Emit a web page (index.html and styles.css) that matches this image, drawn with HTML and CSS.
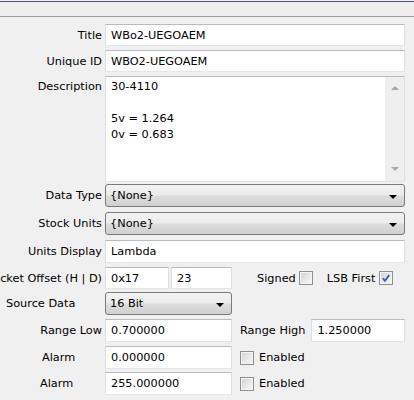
FILE: index.html
```html
<!DOCTYPE html>
<html>
<head>
<meta charset="utf-8">
<link rel="stylesheet" href="styles.css">
</head>
<body>
<div class="topbar"></div>
<div class="form">
  <div class="row h22">
    <div class="lbl">Title</div>
    <div class="field wide">WBo2-UEGOAEM</div>
  </div>
  <div class="row h22 g4">
    <div class="lbl">Unique ID</div>
    <div class="field wide">WBO2-UEGOAEM</div>
  </div>
  <div class="row desc g4">
    <div class="lbl desc-lbl">Description</div>
    <div class="textarea">
      <div class="ta-text">
        <div class="ln">30-4110</div>
        <div class="ln"></div>
        <div class="ln">5v = 1.264</div>
        <div class="ln">0v = 0.683</div>
      </div>
      <div class="scroll">
        <span class="arr up"></span>
        <span class="arr down"></span>
      </div>
    </div>
  </div>
  <div class="row h23 g2">
    <div class="lbl">Data Type</div>
    <div class="select wide"><span>{None}</span><span class="tri"></span></div>
  </div>
  <div class="row h23 g5">
    <div class="lbl">Stock Units</div>
    <div class="select wide"><span>{None}</span><span class="tri"></span></div>
  </div>
  <div class="row h23 g5">
    <div class="lbl">Units Display</div>
    <div class="field wide">Lambda</div>
  </div>
  <div class="row h22 g4">
    <div class="lbl">Packet Offset (H | D)</div>
    <div class="field hex">0x17</div>
    <div class="field dec">23</div>
    <span class="txt signed">Signed</span>
    <span class="cb"></span>
    <span class="txt lsb">LSB First</span>
    <span class="cb checked"><svg width="13" height="13" viewBox="0 0 13 13"><path d="M3 6.2 L5.3 9 L10 2.8" fill="none" stroke="#3d5ea8" stroke-width="2"/></svg></span>
  </div>
  <div class="row h23 g3">
    <div class="lbl left src">Source Data</div>
    <div class="select mid"><span>16 Bit</span><span class="tri"></span></div>
  </div>
  <div class="row h23 g4">
    <div class="lbl">Range Low</div>
    <div class="field mid">0.700000</div>
    <span class="txt rh">Range High</span>
    <div class="field rhf">1.250000</div>
  </div>
  <div class="row h23 g4">
    <div class="lbl left al1">Alarm</div>
    <div class="field mid">0.000000</div>
    <span class="cb en"></span>
    <span class="txt">Enabled</span>
  </div>
  <div class="row h23 g3">
    <div class="lbl left al2">Alarm</div>
    <div class="field mid">255.000000</div>
    <span class="cb en"></span>
    <span class="txt">Enabled</span>
  </div>
</div>
</body>
</html>
```
FILE: styles.css
```css
html, body {
  margin: 0;
  padding: 0;
  background: #f0f0f0;
  overflow: hidden;
}
body {
  width: 414px;
  height: 400px;
  font-family: "DejaVu Sans", Tahoma, sans-serif;
  font-size: 11.3px;
  color: #000;
}
.topbar {
  margin-top: 1px;
  height: 14px;
  border-top: 1px solid #4b5766;
  border-bottom: 1px solid #9c9c9c;
  background: #eeeeee;
}
.form {
  padding-top: 7px;
}
.row {
  display: flex;
  align-items: center;
}
.h22 { height: 22px; }
.h23 { height: 23px; }
.g2 { margin-top: 2px; }
.g3 { margin-top: 3px; }
.g4 { margin-top: 4px; }
.g5 { margin-top: 5px; }
.lbl {
  flex: none;
  width: 102px;
  margin-right: 3px;
  display: flex;
  justify-content: flex-end;
  white-space: nowrap;
}
.lbl.left { justify-content: flex-start; box-sizing: border-box; }
.src { padding-left: 6px; }
.al1 { padding-left: 42px; }
.al2 { padding-left: 40px; }
.field {
  box-sizing: border-box;
  height: 100%;
  background: #fff;
  border: 1px solid;
  border-color: #b9bbc0 #dcdfe4 #e3e6ea #dcdfe4;
  padding-left: 5px;
  display: flex;
  align-items: center;
  white-space: nowrap;
}
.wide { width: 300px; flex: none; }
.mid { width: 127px; flex: none; }
.hex { width: 64px; flex: none; }
.dec { width: 61px; flex: none; margin-left: 2px; }
.rhf { width: 94px; flex: none; margin-left: 6px; }
.desc { align-items: flex-start; height: 106px; }
.desc-lbl { padding-top: 3px; line-height: 16px; }
.textarea {
  box-sizing: border-box;
  width: 300px;
  height: 106px;
  background: #fff;
  border: 1px solid;
  border-color: #b9bbc0 #dcdfe4 #e3e6ea #dcdfe4;
  display: flex;
}
.ta-text {
  flex: 1;
  padding: 2px 0 0 5px;
  line-height: 16px;
}
.ln { height: 16px; white-space: nowrap; }
.scroll {
  width: 19px;
  background: #efefef;
  display: flex;
  flex-direction: column;
  justify-content: space-between;
  align-items: center;
  padding: 9px 0 10px;
  box-sizing: border-box;
}
.arr {
  width: 0;
  height: 0;
  border-left: 4px solid transparent;
  border-right: 4px solid transparent;
}
.arr.up { border-bottom: 4px solid #a8a8a8; }
.arr.down { border-top: 4px solid #a8a8a8; }
.select {
  box-sizing: border-box;
  height: 100%;
  border: 1px solid #7a7a7a;
  border-radius: 3px;
  background: linear-gradient(to bottom, #f3f3f3 0%, #ebebeb 48%, #dddddd 52%, #d0d0d0 100%);
  display: flex;
  align-items: center;
  justify-content: space-between;
  padding: 0 7px 0 4px;
}
.tri {
  width: 0;
  height: 0;
  border-left: 4px solid transparent;
  border-right: 4px solid transparent;
  border-top: 4px solid #000;
  margin-top: 2px;
}
.txt { white-space: nowrap; }
.signed { margin-left: 25px; margin-right: 3px; }
.lsb { margin-left: 14px; margin-right: 4px; }
.rh { margin-left: 8px; }
.cb {
  box-sizing: border-box;
  flex: none;
  width: 14px;
  height: 14px;
  border: 1px solid #8e8f8f;
  background: linear-gradient(135deg, #cfd1d4 0%, #e9e9e9 55%, #f7f7f7 100%);
  box-shadow: inset 0 0 0 1px #f4f4f4;
  display: flex;
  align-items: center;
  justify-content: center;
}
.cb svg { display: block; }
.cb.en { margin-left: 8px; margin-right: 5px; }
```
